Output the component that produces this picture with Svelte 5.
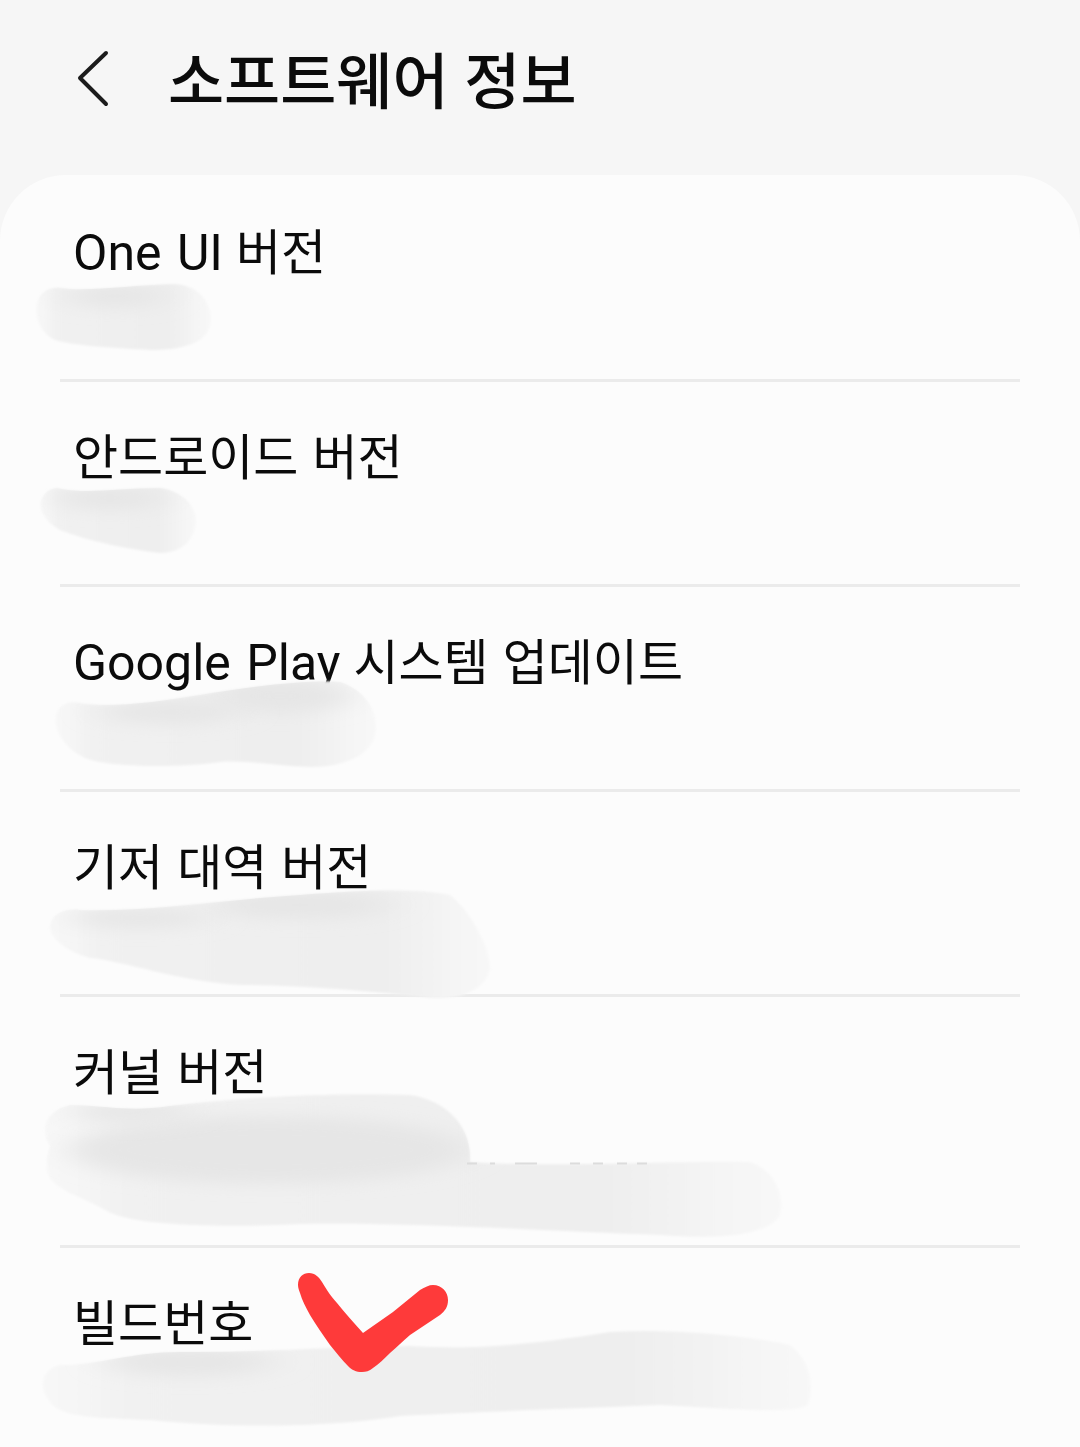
<script>
	// smudges painted over the version numbers in the screenshot,
	// each with the darker streaks that run along its top edge
	const smudges = [
		{
			d: 'M60 288C90 292 130 285 175 284C198 285 212 303 211 320C210 340 190 350 150 350C110 348 70 345 55 340C38 332 33 312 38 300C42 290 52 287 60 288Z',
			streaks: [[115, 296, 50, 12]]
		},
		{
			d: 'M62 489C90 494 120 488 160 488C184 491 197 508 196 522C194 542 180 553 160 553C130 550 85 540 60 530C42 520 36 505 44 495C48 489 55 487 62 489Z',
			streaks: [[110, 498, 55, 12]]
		},
		{
			d: 'M80 703C110 708 150 703 200 695C260 685 310 680 340 682C365 690 377 710 376 730C374 752 350 767 310 767C280 766 250 760 220 762C180 768 110 768 85 758C60 746 52 725 57 712C62 703 70 701 80 703Z',
			streaks: [[280, 696, 70, 17], [170, 712, 70, 12]]
		},
		{
			d: 'M80 910C150 912 220 900 300 895C360 890 420 888 450 895C470 910 492 950 490 970C485 990 460 1000 430 998C380 992 300 985 240 985C180 982 120 960 90 958C62 950 48 935 50 925C52 914 65 908 80 910Z',
			streaks: [[300, 905, 90, 14], [140, 918, 70, 10]]
		},
		{
			d: 'M70 1105C110 1106 130 1112 170 1106C230 1098 330 1092 410 1095C445 1100 472 1125 470 1162C560 1168 680 1160 750 1162C775 1170 785 1195 780 1215C770 1235 720 1240 660 1235C560 1232 420 1222 300 1224C220 1228 130 1226 105 1210C80 1195 50 1190 47 1170C46 1160 48 1150 50 1146C42 1135 40 1112 70 1105Z',
			streaks: [[270, 1150, 200, 34], [130, 1112, 60, 10]]
		},
		{
			d: 'M60 1365C95 1366 130 1352 180 1352C260 1353 340 1346 410 1346C470 1350 530 1345 610 1332C680 1328 760 1338 790 1345C810 1360 815 1385 808 1405C795 1415 720 1408 660 1405C580 1408 480 1412 400 1416C330 1428 220 1428 150 1420C100 1418 60 1418 50 1402C38 1388 40 1370 60 1365Z',
			streaks: [[190, 1362, 85, 14]]
		}
	];

	const rows = [
		{ latin: 'One UI', title: '버전' },
		{ title: '안드로이드 버전' },
		{ latin: 'Google Play', title: '시스템 업데이트' },
		{ title: '기저 대역 버전' },
		{ title: '커널 버전', tall: true },
		{ title: '빌드번호', last: true }
	];
</script>

<div class="screen">
	<header class="topbar">
		<svg class="back" width="44" height="66" viewBox="0 0 44 66" aria-hidden="true">
			<path d="M36 8 L10 33 L36 59" fill="none" stroke="#1c1c1c" stroke-width="4" stroke-linecap="round" stroke-linejoin="round" />
		</svg>
		<h1>소프트웨어 정보</h1>
	</header>

	<section class="card">
		{#each rows as row}
			<div class="row" class:tall={row.tall} class:last={row.last}>
				<div class="title">
					{#if row.latin}<span class="latin">{row.latin}</span>{' '}{/if}{row.title}
				</div>
			</div>
		{/each}
	</section>

	<svg class="paint" width="1080" height="1447" viewBox="0 0 1080 1447" aria-hidden="true">
		<defs>
			<linearGradient id="fade" x1="0" y1="0" x2="1" y2="0">
				<stop offset="0" stop-color="#f8f8f8" />
				<stop offset="0.12" stop-color="#f1f1f1" />
				<stop offset="0.75" stop-color="#eeeeee" />
				<stop offset="1" stop-color="#f8f8f8" />
			</linearGradient>
			<filter id="soft"><feGaussianBlur stdDeviation="1.2" /></filter>
			<filter id="streak" x="-50%" y="-100%" width="200%" height="300%"><feGaussianBlur stdDeviation="18 8" /></filter>
			{#each smudges as s, i}
				<clipPath id="clip{i}"><path d={s.d} /></clipPath>
			{/each}
		</defs>
		{#each smudges as s, i}
			<path d={s.d} fill="url(#fade)" filter="url(#soft)" />
			<g clip-path="url(#clip{i})">
				{#each s.streaks as [cx, cy, rx, ry]}
					<ellipse {cx} {cy} {rx} {ry} fill="#e6e6e6" filter="url(#streak)" />
				{/each}
			</g>
		{/each}
		<path class="specks" d="M467 1163.5h10M490 1163.5h5M515 1163.5h22M570 1163.5h10M593 1163.5h10M617 1163.5h10M637 1163.5h10" />
		<path
			d="M298 1285C298 1277 303 1273 309 1273C315 1273 319 1277 322 1282C328 1292 331 1296 337 1303C345 1313 354 1323 363 1333C373 1326 383 1319 393 1312C402 1305 411 1297 420 1290C425 1287 429 1285 433 1285C442 1285 448 1292 448 1300C448 1307 445 1311 440 1315C430 1322 420 1328 410 1335C403 1341 397 1347 390 1353C384 1359 379 1364 373 1368C369 1371 366 1372 362 1372C356 1372 352 1370 348 1366C342 1360 336 1352 330 1345C323 1335 316 1325 310 1315C306 1308 302 1300 300 1293C299 1290 298 1288 298 1285Z"
			fill="#fe3a3a"
		/>
	</svg>
</div>

<style>
	:global(body) {
		margin: 0;
		background: #f6f6f6;
	}
	.screen {
		position: relative;
		width: 1080px;
		height: 1447px;
		overflow: hidden;
		background: #f6f6f6;
		font-family: "Noto Sans CJK KR", sans-serif;
		color: #0b0b0b;
	}
	.topbar {
		display: flex;
		align-items: center;
		gap: 54px;
		height: 175px;
		padding: 0 0 20px 70px;
		box-sizing: border-box;
	}
	.back {
		flex: none;
	}
	h1 {
		margin: 0;
		font-size: 61px;
		font-weight: 500;
		line-height: 1;
		word-spacing: 2px;
	}
	.card {
		height: 1272px;
		padding: 0 60px;
		background: #fcfcfc;
		border-radius: 66px 66px 0 0;
	}
	.row {
		height: 205px;
		padding: 42px 0 0 13px;
		box-sizing: border-box;
		border-bottom: 3px solid #ebebeb;
	}
	.row:first-child {
		height: 207px;
		padding-top: 44px;
	}
	.row.tall {
		height: 251px;
	}
	.row.last {
		border-bottom: 0;
	}
	.title {
		font-size: 49px;
		line-height: 60px;
		word-spacing: 3px;
	}
	.latin {
		margin-right: -1px;
		font-family: Roboto, sans-serif;
		font-size: 50px;
		font-weight: 400;
		line-height: 1;
	}
	.paint {
		position: absolute;
		top: 0;
		left: 0;
		pointer-events: none;
	}
	.specks {
		fill: none;
		stroke: #dcdcdc;
		stroke-width: 2;
	}
</style>
